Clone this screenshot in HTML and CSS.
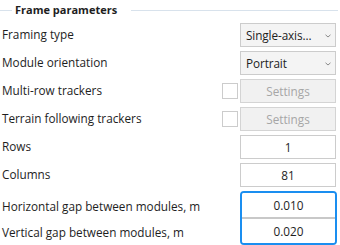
FILE: index.html
```html
<!DOCTYPE html>
<html lang="en">
<head>
    <meta charset="UTF-8">
    <meta name="viewport" content="width=device-width, initial-scale=1.0">
    <title>Frame parameters</title>
    <link rel="stylesheet" href="styles.css">
</head>
<body>
    <div class="panel">
        <div class="group-title">
            <span class="line short"></span>
            <span class="title">Frame parameters</span>
            <span class="line"></span>
        </div>

        <div class="rows">
            <div class="row">
                <span class="label">Framing type</span>
                <div class="select">
                    <span>Single-axis...</span>
                    <svg class="chevron" width="6" height="4" viewBox="0 0 6 4"><polyline points="0.5,0.8 3,3 5.5,0.8" fill="none" stroke="#8a8a8a" stroke-width="1"/></svg>
                </div>
            </div>
            <div class="row">
                <span class="label">Module orientation</span>
                <div class="select">
                    <span>Portrait</span>
                    <svg class="chevron" width="6" height="4" viewBox="0 0 6 4"><polyline points="0.5,0.8 3,3 5.5,0.8" fill="none" stroke="#8a8a8a" stroke-width="1"/></svg>
                </div>
            </div>
            <div class="row">
                <span class="label">Multi-row trackers</span>
                <div class="check-pair">
                    <span class="check"></span>
                    <button class="btn" disabled>Settings</button>
                </div>
            </div>
            <div class="row">
                <span class="label">Terrain following trackers</span>
                <div class="check-pair">
                    <span class="check"></span>
                    <button class="btn" disabled>Settings</button>
                </div>
            </div>
            <div class="row">
                <span class="label">Rows</span>
                <input class="num" type="text" value="1">
            </div>
            <div class="row">
                <span class="label">Columns</span>
                <input class="num" type="text" value="81">
            </div>
            <div class="row pair">
                <div class="pair-labels">
                    <span class="label">Horizontal gap between modules, m</span>
                    <span class="label">Vertical gap between modules, m</span>
                </div>
                <div class="focus-group">
                    <input class="num" type="text" value="0.010">
                    <input class="num" type="text" value="0.020">
                </div>
            </div>
        </div>
    </div>
</body>
</html>
```

FILE: styles.css
```css
body {
    margin: 0;
    background: #ffffff;
    font-family: "Open Sans", "Noto Sans", sans-serif;
    font-size: 11.75px;
    color: #1e1e1e;
}
.panel {
    width: 340px;
    height: 245px;
    overflow: hidden;
}
.group-title {
    display: flex;
    align-items: center;
    height: 20px;
    margin-bottom: 3px;
}
.group-title .line {
    flex: 1;
    height: 1px;
    background: #d8e2ec;
    margin-right: 2px;
}
.group-title .line.short {
    flex: 0 0 12px;
    margin-right: 0;
}
.title {
    font-weight: 700;
    font-size: 11px;
    padding: 0 14px 0 3px;
    line-height: 18px;
}
.rows {
    display: flex;
    flex-direction: column;
    gap: 4px;
    padding-left: 2px;
}
.row {
    display: flex;
    align-items: center;
    justify-content: space-between;
    height: 24px;
    padding-right: 4px;
}
.row .label {
    margin-top: -2px;
}
.select {
    box-sizing: border-box;
    width: 96px;
    height: 24px;
    border: 1px solid #cccccc;
    background: #f4f4f4;
    display: flex;
    align-items: center;
    justify-content: space-between;
    padding: 0 4px 0 5px;
    white-space: nowrap;
}
.select span {
    letter-spacing: -0.1px;
}
.chevron {
    margin-top: 1px;
}
.check-pair {
    display: flex;
    align-items: center;
    gap: 2px;
}
.check {
    width: 14px;
    height: 14px;
    border: 1px solid #cccccc;
    background: #ffffff;
}
.btn {
    box-sizing: border-box;
    width: 96px;
    height: 24px;
    margin: 0;
    border: 1px solid #d4d4d4;
    background: #f1f1f1;
    color: #a6a6a6;
    font-family: inherit;
    font-size: 11.75px;
}
.num {
    box-sizing: border-box;
    width: 96px;
    height: 24px;
    margin: 0;
    border: 1px solid #cccccc;
    background: #ffffff;
    text-align: center;
    font-family: inherit;
    font-size: 11.75px;
    color: #1e1e1e;
    padding: 0;
    outline: none;
}
.row.pair {
    height: 54px;
    padding-right: 3px;
}
.pair-labels {
    display: flex;
    flex-direction: column;
    gap: 2px;
    padding-top: 2px;
}
.pair-labels .label {
    height: 24px;
    line-height: 24px;
    margin-top: 0;
}
.focus-group {
    display: flex;
    flex-direction: column;
    border: 2px solid #1a8ef0;
    border-radius: 4px;
    overflow: hidden;
}
.focus-group .num {
    width: 93px;
    height: 25px;
    border-color: #c8c8c8;
    border-left: none;
    border-right: none;
}
.focus-group .num:first-child {
    border-top: none;
}
.focus-group .num:last-child {
    border-bottom: none;
}
```
